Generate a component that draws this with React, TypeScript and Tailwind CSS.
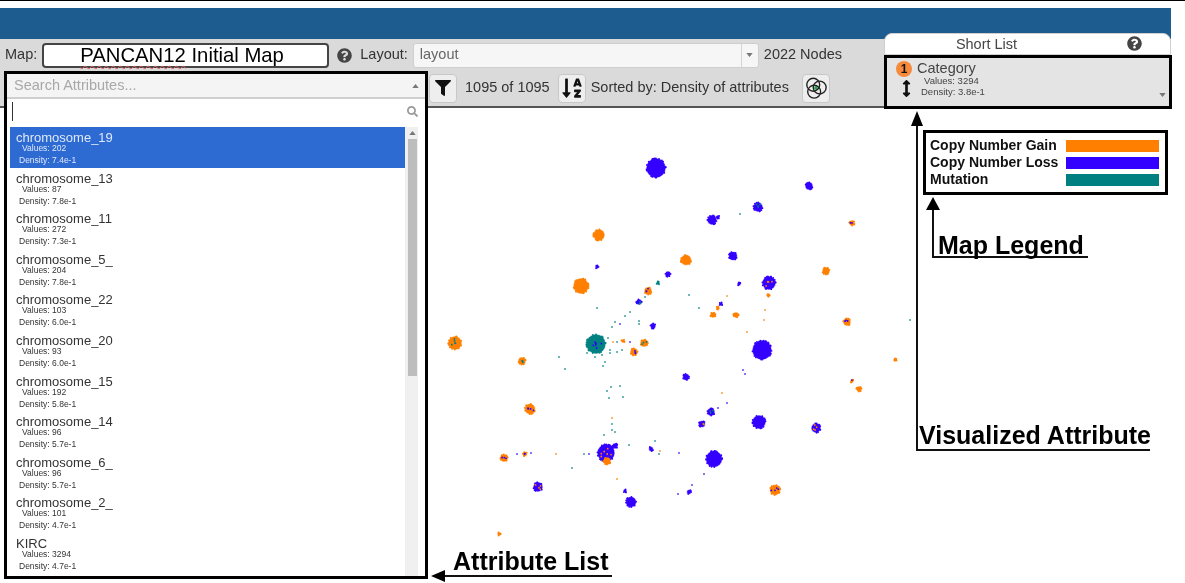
import { FaArrowsAltV, FaFilter, FaQuestionCircle, FaSearch, FaSortAlphaDown } from "react-icons/fa";

const ORANGE = "#ff8000";
const BLUE = "#3300ff";
const TEAL = "#008080";

const attributes = [
  { name: "chromosome_19", values: "202", density: "7.4e-1" },
  { name: "chromosome_13", values: "87", density: "7.8e-1" },
  { name: "chromosome_11", values: "272", density: "7.3e-1" },
  { name: "chromosome_5_", values: "204", density: "7.8e-1" },
  { name: "chromosome_22", values: "103", density: "6.0e-1" },
  { name: "chromosome_20", values: "93", density: "6.0e-1" },
  { name: "chromosome_15", values: "192", density: "5.8e-1" },
  { name: "chromosome_14", values: "96", density: "5.7e-1" },
  { name: "chromosome_6_", values: "96", density: "5.7e-1" },
  { name: "chromosome_2_", values: "101", density: "4.7e-1" },
  { name: "KIRC", values: "3294", density: "4.7e-1" },
];

// x, y, radius, main colour, colour of the specks on top
type Cluster = [number, number, number, string, string?];

const clusters: Cluster[] = [
  [656, 168, 10, BLUE],
  [599, 235, 6, ORANGE],
  [686, 260, 5.5, ORANGE],
  [597, 267, 2, BLUE],
  [668, 274, 3, BLUE],
  [658, 283, 2, TEAL],
  [581, 286, 8, ORANGE],
  [648, 291, 4, ORANGE, BLUE],
  [639, 302, 3, BLUE, TEAL],
  [455, 343, 7, ORANGE, TEAL],
  [596, 344, 10, TEAL, BLUE],
  [644, 343, 4, ORANGE, TEAL],
  [634, 352, 4, ORANGE, BLUE],
  [623, 341, 2, ORANGE],
  [522, 361, 4, ORANGE, TEAL],
  [653, 326, 3, BLUE],
  [686, 377, 3.5, BLUE],
  [809, 186, 4, BLUE],
  [758, 207, 5, BLUE, TEAL],
  [712, 220, 5, BLUE],
  [718, 217, 2, BLUE],
  [852, 223, 3, ORANGE, BLUE],
  [733, 256, 4.5, BLUE],
  [826, 271, 4, ORANGE],
  [769, 283, 7, BLUE, ORANGE],
  [739, 284, 2, BLUE],
  [768, 295, 2, ORANGE],
  [713, 315, 3, ORANGE],
  [736, 315, 3, ORANGE],
  [721, 304, 2, BLUE],
  [718, 308, 2, ORANGE],
  [847, 322, 4, ORANGE, BLUE],
  [762, 350, 10, BLUE],
  [895, 360, 2, ORANGE],
  [852, 381, 2, ORANGE, BLUE],
  [859, 389, 3, ORANGE],
  [530, 409, 5.5, ORANGE, BLUE],
  [711, 412, 4, BLUE, TEAL],
  [702, 424, 3.5, BLUE, ORANGE],
  [759, 422, 7, BLUE],
  [816, 428, 5, BLUE, ORANGE],
  [606, 453, 9, BLUE, ORANGE],
  [607, 461, 4, ORANGE],
  [615, 446, 3, BLUE],
  [504, 458, 4, ORANGE, BLUE],
  [525, 454, 2.5, ORANGE, BLUE],
  [651, 449, 2.5, BLUE],
  [714, 459, 8.5, BLUE],
  [538, 487, 5, BLUE, ORANGE],
  [625, 491, 2, BLUE],
  [631, 502, 5.5, BLUE],
  [689, 492, 2.5, BLUE],
  [775, 490, 5.5, ORANGE, BLUE],
  [499, 534, 2, ORANGE],
];

const strays: [number, number, string][] = [
  [597, 308, TEAL], [612, 327, TEAL], [615, 322, TEAL], [625, 316, TEAL], [630, 312, TEAL],
  [639, 321, TEAL], [639, 324, TEAL], [620, 324, BLUE], [640, 302, TEAL], [645, 297, TEAL],
  [608, 338, TEAL], [613, 342, ORANGE], [617, 342, TEAL], [630, 342, BLUE], [610, 350, TEAL],
  [617, 352, TEAL], [622, 350, TEAL], [610, 353, TEAL], [587, 353, TEAL], [595, 357, TEAL],
  [602, 355, TEAL], [605, 362, TEAL], [603, 366, TEAL], [559, 357, TEAL], [565, 369, TEAL],
  [611, 387, TEAL], [620, 386, TEAL], [607, 391, TEAL], [609, 398, TEAL], [623, 397, TEAL],
  [740, 214, TEAL], [689, 295, TEAL], [699, 308, TEAL], [910, 320, TEAL], [727, 296, ORANGE],
  [765, 310, ORANGE], [764, 320, ORANGE], [747, 332, ORANGE], [743, 370, BLUE], [745, 374, BLUE],
  [612, 418, ORANGE], [612, 424, TEAL], [612, 430, TEAL], [615, 432, TEAL], [604, 435, TEAL],
  [584, 454, TEAL], [572, 468, TEAL], [589, 454, BLUE], [629, 445, TEAL], [655, 441, TEAL],
  [660, 451, ORANGE], [659, 454, TEAL], [679, 453, BLUE], [722, 393, ORANGE], [727, 403, BLUE],
  [718, 408, BLUE], [617, 479, ORANGE], [704, 474, BLUE], [678, 494, BLUE], [692, 485, BLUE],
  [517, 454, BLUE], [531, 453, BLUE], [556, 454, ORANGE],
];

// fixed pseudo random numbers, so every render draws the same map
function rand(seed: number) {
  const v = Math.sin(seed * 127.1 + 11.7) * 43758.5453;
  return v - Math.floor(v);
}

function ScatterMap() {
  return (
    <svg viewBox="0 108 1185 475" className="block h-[475px] w-[1185px]">
      {clusters.map(([x, y, r, color, speck], i) => {
        const count = Math.round(r * 2);
        return (
          <g key={i}>
            <circle cx={x} cy={y} r={r} fill={color} opacity={0.3} />
            <circle cx={x} cy={y} r={r - 0.6} fill={color} />
            {Array.from({ length: count }, (_, j) => {
              const a = rand(i * 31 + j) * Math.PI * 2;
              return (
                <circle key={j} cx={x + Math.cos(a) * (r - 0.4)} cy={y + Math.sin(a) * (r - 0.4)} r={0.9} fill={color} />
              );
            })}
            {speck &&
              Array.from({ length: Math.max(1, Math.round(r * 0.7)) }, (_, j) => {
                const a = rand(i * 17 + j + 200) * Math.PI * 2;
                const d = rand(i * 13 + j + 400) * r * 0.7;
                return (
                  <circle key={j} cx={x + Math.cos(a) * d} cy={y + Math.sin(a) * d} r={0.9} fill={speck} />
                );
              })}
          </g>
        );
      })}
      {strays.map(([x, y, color], i) => (
        <circle key={i} cx={x} cy={y} r={1} fill={color} opacity={0.75} />
      ))}
    </svg>
  );
}

function Caret({ up = false }: { up?: boolean }) {
  return (
    <svg viewBox="0 0 8 5" className="h-[4px] w-[7px] fill-[#777]">
      <path d={up ? "M0 5 4 0 8 5Z" : "M0 0 4 5 8 0Z"} />
    </svg>
  );
}

function VennIcon() {
  return (
    <svg viewBox="0 0 26 26" className="h-[24px] w-[24px]">
      <circle cx="13" cy="13" r="2" fill="#19a84a" />
      <g fill="none" stroke="#222" strokeWidth="1.5">
        <circle cx="10" cy="9.5" r="7" />
        <circle cx="17" cy="12.5" r="7" />
        <circle cx="11" cy="17" r="7" />
      </g>
    </svg>
  );
}

function IconButton({ children }: { children: React.ReactNode }) {
  return (
    <div className="flex h-[29px] w-[28px] items-center justify-center rounded-[4px] border border-[#c8c8c8] bg-[#eeeeee] text-[#111]">
      {children}
    </div>
  );
}

function AttributeList() {
  return (
    <div className="absolute left-[4px] top-[71px] h-[508px] w-[424px] overflow-hidden border-[3px] border-black bg-white">
      <div className="flex h-[25px] items-center justify-between border-b-2 border-[#cfcfcf] bg-[#f4f4f4] pl-[7px] pr-[6px] text-[14.5px] text-[#a8a8a8]">
        <span>Search Attributes...</span>
        <Caret up />
      </div>
      <div className="flex h-[25px] items-center justify-between bg-white pl-[5px] pr-[7px]">
        <div className="h-[19px] w-px bg-[#333]" />
        <FaSearch className="text-[11px] text-[#999]" />
      </div>
      <div className="flex h-[451px] pl-[3px] pt-[3px]">
        <div className="w-[395px] shrink-0">
          {attributes.map((a, i) => (
            <div
              key={a.name}
              className={`h-[40.6px] pl-[6px] ${i === 0 ? "bg-[#2d6bd2] text-[#dfe8f8]" : "text-[#333]"}`}
            >
              <div className="pt-[4px] text-[13px] leading-[13px]">{a.name}</div>
              <div className="pl-[6px] text-[8.5px] leading-[9px]">Values: {a.values}</div>
              <div className="pl-[3px] pt-[3px] text-[8.5px] leading-[9px]">Density: {a.density}</div>
            </div>
          ))}
        </div>
        <div className="flex h-[451px] w-[13px] flex-col items-center bg-[#f0f0f0] pl-[1px] pt-[4px]">
          <Caret up />
          <div className="mt-[4px] h-[237px] w-[9px] bg-[#bdbdbd]" />
        </div>
      </div>
    </div>
  );
}

function ShortList() {
  return (
    <div className="absolute left-[884px] top-[33px] w-[287px]">
      <div className="relative flex h-[22px] items-center justify-center rounded-t-[8px] border border-[#d0d0d0] bg-white pt-[2px] text-[14.5px] text-[#444]">
        <span className="mr-[82px]">Short List</span>
        <FaQuestionCircle className="absolute right-[28px] top-[2px] text-[15px] text-[#444]" />
      </div>
      <div className="relative h-[54px] w-[288px] border-[3px] border-black bg-[#e4e4e4] pl-[9px] pt-[3px] text-[#444]">
        <div className="flex items-start">
          <div className="flex w-[21px] flex-col items-start">
            <div className="flex h-[16px] w-[16px] items-center justify-center rounded-full bg-[#f68a3c] text-[12px] font-bold text-[#111]">
              1
            </div>
            <FaArrowsAltV className="ml-[2px] mt-[3px] text-[17px] text-[#111]" />
          </div>
          <div>
            <div className="text-[14.5px] leading-[15px]">Category</div>
            <div className="pl-[7px] text-[9.5px] leading-[10px]">Values: 3294</div>
            <div className="pl-[4px] pt-[1px] text-[9.5px] leading-[10px]">Density: 3.8e-1</div>
          </div>
        </div>
        <div className="absolute bottom-[9px] right-[3px]">
          <Caret />
        </div>
      </div>
    </div>
  );
}

function Legend() {
  const rows = [
    { label: "Copy Number Gain", color: "bg-[#ff8000]" },
    { label: "Copy Number Loss", color: "bg-[#3300ff]" },
    { label: "Mutation", color: "bg-[#008080]" },
  ];
  return (
    <div className="absolute left-[923px] top-[130px] flex h-[65px] w-[245px] flex-col justify-center gap-[5px] border-[3px] border-black bg-white pl-[4px] pr-[6px]">
      {rows.map((r) => (
        <div key={r.label} className="flex h-[12px] items-center justify-between">
          <span className="text-[14px] font-bold text-[#111]">{r.label}</span>
          <div className={`h-[12px] w-[93px] ${r.color}`} />
        </div>
      ))}
    </div>
  );
}

// the hand drawn arrows that were put on top of the screenshot
function Callouts() {
  return (
    <>
      <svg viewBox="0 0 1185 583" className="pointer-events-none absolute left-0 top-0 h-[583px] w-[1185px]">
        <g fill="none" stroke="#111" strokeWidth="2">
          <path d="M917 123V450H1150" />
          <path d="M933 206V257H1088" />
          <path d="M442 576H612" />
        </g>
        <g fill="#000">
          <path d="M917 111 923 126H911Z" />
          <path d="M933 197 940 210H926Z" />
          <path d="M431 576 445 570V582Z" />
        </g>
      </svg>
      <span className="absolute left-[938px] top-[231px] text-[25px] font-bold leading-[28px] text-black">Map Legend</span>
      <span className="absolute left-[919px] top-[421px] text-[25px] font-bold leading-[28px] text-black">Visualized Attribute</span>
      <span className="absolute left-[453px] top-[547px] text-[25px] font-bold leading-[29px] text-black">Attribute List</span>
    </>
  );
}

export default function App() {
  return (
    <div className="relative h-[583px] w-[1185px] overflow-hidden bg-white font-['Liberation_Sans',sans-serif] blur-[0.4px]">
      <div className="h-[1px] bg-black" />
      <div className="mt-[7px] h-[31px] w-[1171px] bg-[#1c5c8e]" />

      <div className="h-[69px] w-[1171px] border-b-2 border-[#555] bg-[#dadada] text-[14.5px] text-[#333]">
        <div className="flex h-[33px] items-center pb-[3px] pl-[5px] pt-[2px]">
          <span>Map:</span>
          <div className="ml-[5px] flex h-[25px] w-[287px] items-center rounded-[4px] border-2 border-[#444] bg-white pl-[36px] text-[20.3px] text-black">
            <span className="underline decoration-[#e06060] decoration-wavy decoration-1 underline-offset-[3px]">PANCAN12</span>
            <span>&nbsp;Initial Map</span>
          </div>
          <FaQuestionCircle className="ml-[8px] text-[15px] text-[#444]" />
          <span className="ml-[8px]">Layout:</span>
          <div className="ml-[5px] flex h-[25px] w-[346px] items-center justify-between rounded-[3px] border border-[#cfcfcf] bg-[#f6f6f6] pl-[6px] text-[#666]">
            <span>layout</span>
            <div className="flex h-full w-[17px] items-center justify-center border-l border-[#d5d5d5]">
              <Caret />
            </div>
          </div>
          <span className="ml-[5px]">2022 Nodes</span>
        </div>
        <div className="flex h-[33px] items-center pb-[1px] pl-[429px]">
          <IconButton>
            <FaFilter className="text-[16px]" />
          </IconButton>
          <span className="ml-[8px]">1095 of 1095</span>
          <div className="ml-[8px]">
            <IconButton>
              <FaSortAlphaDown className="text-[22px]" />
            </IconButton>
          </div>
          <span className="ml-[5px]">Sorted by: Density of attributes</span>
          <div className="ml-[13px]">
            <IconButton>
              <VennIcon />
            </IconButton>
          </div>
        </div>
      </div>

      <ScatterMap />

      <AttributeList />
      <ShortList />
      <Legend />
      <Callouts />
    </div>
  );
}
